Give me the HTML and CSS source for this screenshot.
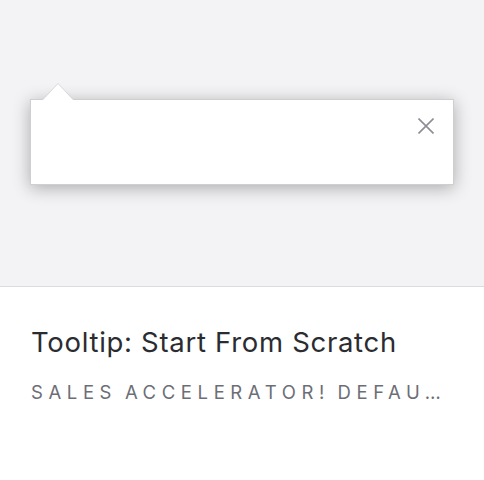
FILE: index.html
```html
<!DOCTYPE html>
<html>
<head>
<meta charset="utf-8">
<link rel="stylesheet" href="styles.css">
</head>
<body>
<div class="preview">
  <div class="tooltip">
    <button class="close" aria-label="Close">
      <svg width="16" height="16" viewBox="0 0 16 16"><path d="M0.5 0.5L15.5 15.5M15.5 0.5L0.5 15.5" stroke="#8b8e95" stroke-width="1.6" fill="none"/></svg>
    </button>
  </div>
</div>
<div class="info">
  <div class="title">Tooltip: Start From Scratch</div>
  <div class="subtitle">SALES ACCELERATOR! DEFAU…</div>
</div>
</body>
</html>
```
FILE: styles.css
```css
html, body { margin: 0; padding: 0; background: #fff; }
body { width: 484px; height: 480px; overflow: hidden; font-family: "Inter", "Open Sans", sans-serif; }
.preview {
  box-sizing: border-box;
  background: #f3f3f5;
  border-bottom: 1px solid #d9dce0;
  padding: 99px 0 0 30px;
  height: 287px;
}
.tooltip {
  position: relative;
  width: 424px;
  height: 86px;
  box-sizing: border-box;
  background: #fff;
  border: 1px solid #cfcfd1;
  box-shadow: 0 3px 16px rgba(0,0,0,0.3);
  display: flex;
  justify-content: flex-end;
  align-items: flex-start;
  padding: 18px 19px 0 0;
}
.tooltip::before {
  content: "";
  position: absolute;
  left: 11px;
  top: -17px;
  width: 0; height: 0;
  border-left: 16px solid transparent;
  border-right: 16px solid transparent;
  border-bottom: 17px solid #d6d6d8;
}
.tooltip::after {
  content: "";
  position: absolute;
  left: 12px;
  top: -16px;
  width: 0; height: 0;
  border-left: 15px solid transparent;
  border-right: 15px solid transparent;
  border-bottom: 16px solid #fff;
}
.close { border: 0; background: none; padding: 0; margin: 0; width: 16px; height: 16px; display: block; cursor: pointer; }
.close svg { display: block; }
.info { padding: 38px 31px 0 31px; }
.title { font-size: 27.5px; letter-spacing: 0.7px; color: #2b2c31; line-height: 34px; white-space: nowrap; }
.subtitle {
  margin-top: 22px;
  font-size: 18.5px;
  letter-spacing: 5.6px;
  word-spacing: -3px;
  color: #6c6e76;
  white-space: nowrap;
  line-height: 22px;
}
```
